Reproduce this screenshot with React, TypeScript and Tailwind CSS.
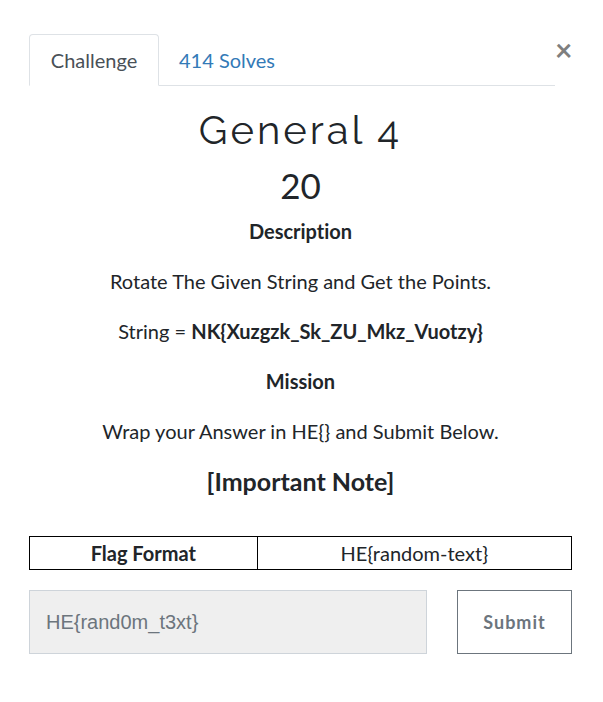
import React, { useState } from "react";

export default function App() {
  const [tab, setTab] = useState("challenge");
  return (
    <main className="pr-[31px] pl-[29px] pt-[34px] pb-12 font-['Lato',sans-serif] text-xl leading-[30px] text-[#212529] [font-variant-ligatures:none]">
      <header className="flex items-start justify-between">
        <div role="tablist" className="flex h-[52px] grow border-b border-[#dee2e6]">
          <button
            role="tab"
            aria-selected={tab === "challenge"}
            onClick={() => setTab("challenge")}
            className="-mb-px w-[130px] rounded-t border border-[#dee2e6] border-b-white bg-white text-[#495057]"
          >
            Challenge
          </button>
          <button
            role="tab"
            aria-selected={tab === "solves"}
            onClick={() => setTab("solves")}
            className="px-5 text-[#337ab7]"
          >
            414 Solves
          </button>
        </div>
        <button aria-label="Close" className="w-[17px] text-center text-[30px] leading-[30px] font-bold text-[#7f7f7f]">
          ×
        </button>
      </header>
      <section className="text-center">
        <h2 className="mt-5 font-['Raleway','Lato',sans-serif] text-[40px] leading-[48px] tracking-[3px]">General 4</h2>
        <h3 className="mt-[10px] text-[35px] leading-[42px]">20</h3>
        <div className="mt-[10px] flex flex-col gap-5">
          <p className="font-bold">Description</p>
          <p>Rotate The Given String and Get the Points.</p>
          <p>
            String = <strong>NK&#123;Xuzgzk_Sk_ZU_Mkz_Vuotzy&#125;</strong>
          </p>
          <p className="font-bold">Mission</p>
          <p>Wrap your Answer in HE&#123;&#125; and Submit Below.</p>
          <h4 className="text-[25px] leading-[30px] font-bold">[Important Note]</h4>
        </div>
        <table className="mt-10 w-full border-collapse">
          <tbody>
            <tr>
              <th className="w-[42%] border border-black py-px font-bold">Flag Format</th>
              <td className="border border-black py-px">HE&#123;random-text&#125;</td>
            </tr>
          </tbody>
        </table>
      </section>
      <form className="mt-5 flex gap-[30px]" onSubmit={(e) => e.preventDefault()}>
        <input
          type="text"
          aria-label="Flag"
          placeholder="HE{rand0m_t3xt}"
          className="h-16 min-w-0 grow border border-[#ced4da] bg-[#efefef] px-4 font-['Liberation_Sans',sans-serif] text-xl placeholder:text-[#6c757d]"
        />
        <button type="submit" className="h-16 w-[115px] shrink-0 border border-[#6c757d] text-lg font-bold tracking-[1px] text-[#6c757d]">
          Submit
        </button>
      </form>
    </main>
  );
}
